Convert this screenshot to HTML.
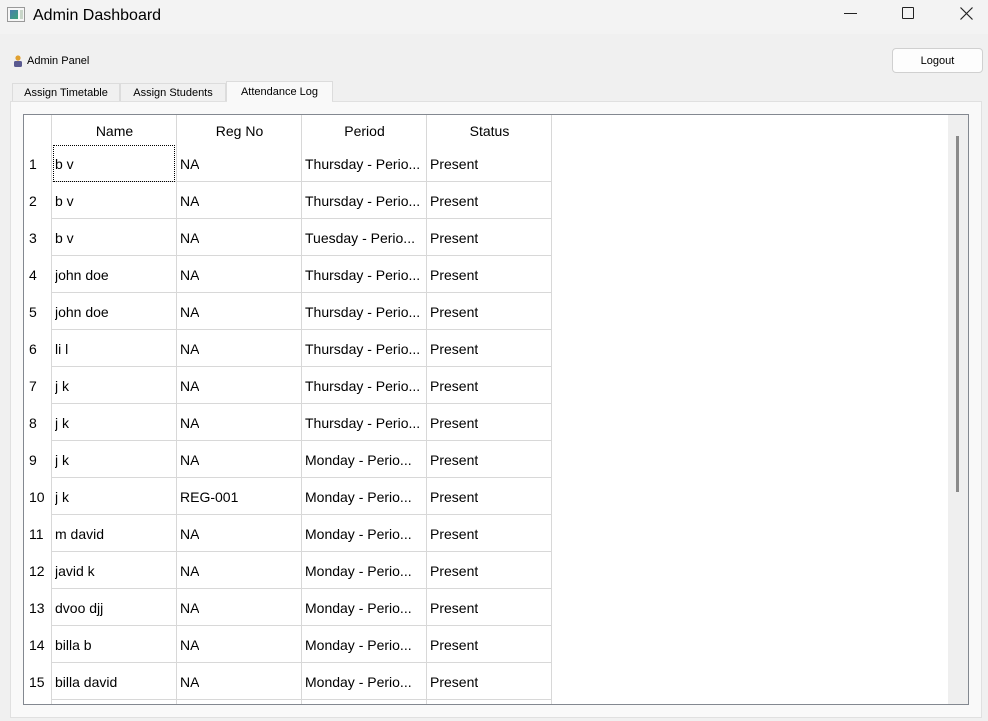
<!DOCTYPE html>
<html><head><meta charset="utf-8"><style>
*{margin:0;padding:0;box-sizing:border-box}
body{width:988px;height:721px;background:#f0f0f0;font-family:"Liberation Sans","DejaVu Sans",sans-serif;position:relative;overflow:hidden;color:#000}
.a{position:absolute}
.title{left:0;top:0;width:988px;height:34px;background:#f3f3f3}
.cell{position:absolute;font-size:14px;line-height:37px;white-space:nowrap;overflow:hidden}
.hl{position:absolute;height:1px;background:#d8d8d8}
.vl{position:absolute;width:1px;background:#d8d8d8}
.tab{position:absolute;top:83px;height:19px;font-size:11px;line-height:19px;text-align:center;background:#f0f0f0;border:1px solid #dcdcdc;border-bottom:none}
</style></head><body>
<div class="a title"></div>
<div class="a" style="left:7px;top:7px;width:18px;height:15px;border:1px solid #999;background:#f6f6f6">
 <div class="a" style="left:2px;top:2px;width:8px;height:9px;background:linear-gradient(135deg,#4a7cae,#3da37a)"></div>
 <div class="a" style="left:12px;top:2px;width:3px;height:9px;background:#c9d6c9"></div>
</div>
<div class="a" style="left:33px;top:7px;font-size:16px">Admin Dashboard</div>
<div class="a" style="left:844px;top:13px;width:13px;height:1px;background:#222"></div>
<div class="a" style="left:902px;top:7px;width:12px;height:12px;border:1.3px solid #222;border-radius:1px"></div>
<svg class="a" style="left:960px;top:7px" width="13" height="13"><path d="M0.5 0.5L12.5 12.5M12.5 0.5L0.5 12.5" stroke="#222" stroke-width="1.2"/></svg>

<svg class="a" style="left:13px;top:55px" width="10" height="12"><circle cx="5" cy="3" r="2.6" fill="#e0a030"/><rect x="1" y="6" width="8" height="6" rx="1.5" fill="#5a5a90"/></svg>
<div class="a" style="left:27px;top:55px;font-size:11px">Admin Panel</div>
<div class="a" style="left:892px;top:48px;width:91px;height:25px;background:#fdfdfd;border:1px solid #d0d0d0;border-radius:4px;font-size:11px;text-align:center;line-height:25px">Logout</div>

<div class="tab" style="left:12px;width:108px">Assign Timetable</div>
<div class="tab" style="left:120px;width:106px">Assign Students</div>
<div class="tab" style="left:226px;top:81px;height:21px;width:107px;background:#f9f9f9;line-height:21px">Attendance Log</div>
<div class="a" style="left:10px;top:101px;width:972px;height:617px;background:#f9f9f9;border:1px solid #e0e0e0"></div>
<div class="a" style="left:227px;top:100px;width:105px;height:3px;background:#f9f9f9"></div>

<div class="a" style="left:23px;top:114px;width:946px;height:591px;background:#fff;border:1px solid #838890;overflow:hidden" id="t">
 <div class="a" style="left:924px;top:0;width:21px;height:590px;background:#efefef"></div>
 <div class="a" style="left:932px;top:21px;width:3px;height:356px;background:#8a8a8a"></div>
</div>
<div class="a" id="g" style="left:24px;top:115px"></div>
<script>
var g=document.getElementById('g'),h='';
var cols=[28,153,278,403,528];
['Name','Reg No','Period','Status'].forEach(function(t,i){h+='<div class="cell" style="left:'+cols[i]+'px;top:-2px;width:125px;text-align:center;line-height:37px">'+t+'</div>';});
[27,152,277,402,527].forEach(function(x){h+='<div class="vl" style="left:'+x+'px;top:0;height:589px"></div>';});
var d=[['b v','NA','Thursday - Perio...'],['b v','NA','Thursday - Perio...'],['b v','NA','Tuesday - Perio...'],['john doe','NA','Thursday - Perio...'],['john doe','NA','Thursday - Perio...'],['li l','NA','Thursday - Perio...'],['j k','NA','Thursday - Perio...'],['j k','NA','Thursday - Perio...'],['j k','NA','Monday - Perio...'],['j k','REG-001','Monday - Perio...'],['m david','NA','Monday - Perio...'],['javid k','NA','Monday - Perio...'],['dvoo djj','NA','Monday - Perio...'],['billa b','NA','Monday - Perio...'],['billa david','NA','Monday - Perio...']];
d.forEach(function(r,i){var y=30+i*37,ty=y+1;
 h+='<div class="cell" style="left:5px;top:'+ty+'px">'+(i+1)+'</div>';
 h+='<div class="cell" style="left:31px;top:'+ty+'px">'+r[0]+'</div>';
 h+='<div class="cell" style="left:156px;top:'+ty+'px">'+r[1]+'</div>';
 h+='<div class="cell" style="left:281px;top:'+ty+'px">'+r[2]+'</div>';
 h+='<div class="cell" style="left:406px;top:'+ty+'px">Present</div>';
 h+='<div class="hl" style="left:28px;top:'+(y+36)+'px;width:499px"></div>';
});
h+='<div class="a" style="left:29px;top:30px;width:122px;height:37px;border:1px dotted #000"></div>';
g.innerHTML=h;
</script>
</body></html>
